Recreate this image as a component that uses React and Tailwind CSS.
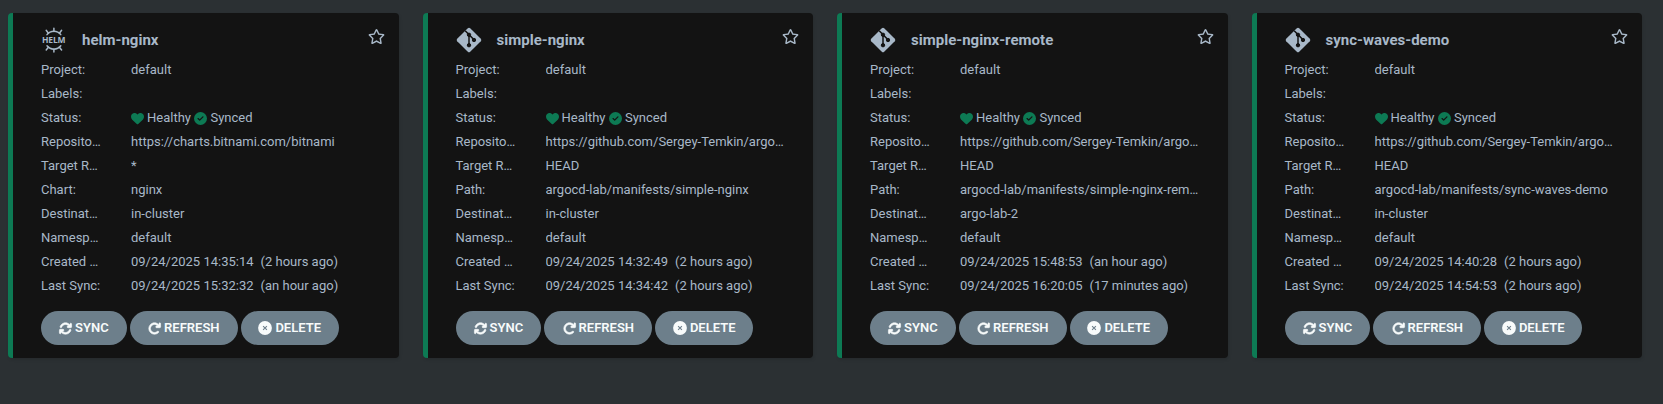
import { FaHeart, FaCircleCheck, FaArrowsRotate, FaArrowRotateRight } from "react-icons/fa6";
import { FaRegStar } from "react-icons/fa";

const REPO = "https://github.com/Sergey-Temkin/argocd-lab.git";

const apps = [
  {
    name: "helm-nginx", helm: true, repo: "https://charts.bitnami.com/bitnami", revision: "*",
    source: ["Chart:", "nginx"], destination: "in-cluster",
    created: ["09/24/2025 14:35:14", "(2 hours ago)"], synced: ["09/24/2025 15:32:32", "(an hour ago)"],
  },
  {
    name: "simple-nginx", repo: REPO, revision: "HEAD",
    source: ["Path:", "argocd-lab/manifests/simple-nginx"], destination: "in-cluster",
    created: ["09/24/2025 14:32:49", "(2 hours ago)"], synced: ["09/24/2025 14:34:42", "(2 hours ago)"],
  },
  {
    name: "simple-nginx-remote", repo: REPO, revision: "HEAD",
    source: ["Path:", "argocd-lab/manifests/simple-nginx-remote"], destination: "argo-lab-2",
    created: ["09/24/2025 15:48:53", "(an hour ago)"], synced: ["09/24/2025 16:20:05", "(17 minutes ago)"],
  },
  {
    name: "sync-waves-demo", repo: REPO, revision: "HEAD",
    source: ["Path:", "argocd-lab/manifests/sync-waves-demo"], destination: "in-cluster",
    created: ["09/24/2025 14:40:28", "(2 hours ago)"], synced: ["09/24/2025 14:54:53", "(2 hours ago)"],
  },
];

function HelmIcon() {
  return (
    <svg viewBox="0 0 25 26" className="h-[26px] w-[25px]" fill="none" stroke="currentColor" strokeWidth="1.5" strokeLinecap="round">
      <path d="M6 7.6A8.8 8.8 0 0 1 19.8 7.6M6 18.8A8.8 8.8 0 0 0 19.8 18.8" />
      <path d="M12.9 4.5V1.2M7.4 6.2L5.2 3.3M18.4 6.2L20.6 3.3M12.9 22V25M7.4 20.2L5.2 23M18.4 20.2L20.6 23" />
      <text x="1" y="16.2" textLength="23.5" fill="currentColor" stroke="none" className="font-['Open_Sans',sans-serif] text-[8.5px] font-bold">HELM</text>
    </svg>
  );
}

function GitIcon() {
  return (
    <svg viewBox="0 0 26 26" className="size-[26px]">
      <path d="M11.8 1.2Q13 0.1 14.2 1.2L24.8 11.8Q25.9 13 24.8 14.2L14.2 24.8Q13 25.9 11.8 24.8L1.2 14.2Q0.1 13 1.2 11.8Z" fill="currentColor" />
      <g fill="#131313" stroke="#131313">
        <path d="M9.2 3.8L13 7.6L18 12.8M13 7.6V18" fill="none" strokeWidth="1.5" />
        <circle cx="13" cy="7.8" r="1.7" />
        <circle cx="18" cy="13" r="1.7" />
        <circle cx="13" cy="18.2" r="1.7" />
      </g>
    </svg>
  );
}

function DeleteIcon({ className }) {
  return (
    <svg viewBox="0 0 14 14" className={className}>
      <circle cx="7" cy="7" r="6.9" fill="currentColor" />
      <path d="M5.1 5.1L8.9 8.9M8.9 5.1L5.1 8.9" stroke="#6d7f8b" strokeWidth="1.1" />
    </svg>
  );
}

function Row({ label, children }) {
  return (
    <div className="flex h-6 items-center">
      <div className="w-[90px] shrink-0 whitespace-nowrap">{label}</div>
      <div className="w-[241px] truncate">{children}</div>
    </div>
  );
}

function Status() {
  return (
    <div className="flex items-center">
      <FaHeart className="mr-[3px] size-[13px] text-[#0d7a54]" />
      Healthy
      <FaCircleCheck className="mr-[3px] ml-[3.5px] size-[13px] text-[#0d7a54]" />
      Synced
    </div>
  );
}

function Action({ icon: Icon, width, iconSize = "size-[13px] stroke-current stroke-[24px] overflow-visible", children }) {
  return (
    <button className={`flex h-[34px] items-center justify-center gap-[3px] rounded-full bg-[#6d7f8b] text-[13px] font-semibold text-[#f8fbfb] ${width}`}>
      <Icon className={iconSize} />
      {children}
    </button>
  );
}

function Card({ app }) {
  return (
    <article className="h-[345px] rounded-[4px] border-l-[5px] border-[#0d7a54] bg-[#131313] pl-[28px] text-[13px] text-[#a8b8c8] shadow-[1px_2px_3px_rgba(0,0,0,0.1)]">
      <header className="flex h-[45px] items-start pt-[14px] pr-[14px]">
        {app.helm ? <HelmIcon /> : <GitIcon />}
        <h2 className={`flex-1 text-[15px] leading-[26px] font-bold tracking-[0.01px] ${app.helm ? "ml-4" : "ml-[15px]"}`}>{app.name}</h2>
        <FaRegStar className="mt-[1px] size-[17px]" />
      </header>
      <Row label="Project:">default</Row>
      <Row label="Labels:" />
      <Row label="Status:"><Status /></Row>
      <Row label="Reposito…">{app.repo}</Row>
      <Row label="Target R…">{app.revision}</Row>
      <Row label={app.source[0]}>{app.source[1]}</Row>
      <Row label="Destinat…">{app.destination}</Row>
      <Row label="Namesp…">default</Row>
      <Row label="Created …">{app.created[0]}<span className="ml-[7px]">{app.created[1]}</span></Row>
      <Row label="Last Sync:">{app.synced[0]}<span className="ml-[7px]">{app.synced[1]}</span></Row>
      <footer className="flex gap-[3px] pt-[13px]">
        <Action icon={FaArrowsRotate} width="w-[85.8px]">SYNC</Action>
        <Action icon={FaArrowRotateRight} width="w-[108px]">REFRESH</Action>
        <Action icon={DeleteIcon} iconSize="size-[14px]" width="w-[97.8px]">DELETE</Action>
      </footer>
    </article>
  );
}

export default function App() {
  return (
    <main className="h-[404px] bg-[#2b3033] pt-[13px] pr-[21px] pl-2 font-[Roboto,sans-serif]">
      <div className="grid grid-cols-4 gap-6">
        {apps.map((app) => <Card key={app.name} app={app} />)}
      </div>
    </main>
  );
}
